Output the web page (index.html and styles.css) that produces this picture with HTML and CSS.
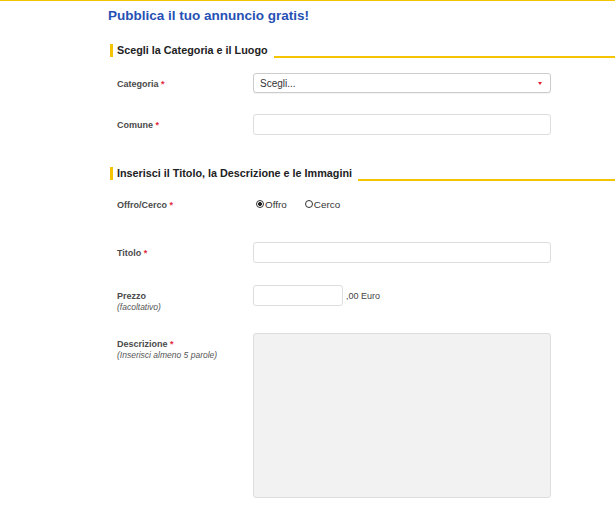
FILE: index.html
```html
<!DOCTYPE html>
<html lang="it">
<head>
  <meta charset="UTF-8" />
  <meta name="viewport" content="width=device-width, initial-scale=1.0" />
  <title>Pubblica il tuo annuncio</title>
  <link rel="stylesheet" href="styles.css">
</head>
<body>
  <div class="page">
    <h1>Pubblica il tuo annuncio gratis!</h1>

    <div class="section-title">
      <span class="section-text">Scegli la Categoria e il Luogo</span>
      <span class="section-line"></span>
    </div>

    <div class="row row-first">
      <label class="field-label" for="categoria">Categoria <span class="req">*</span></label>
      <div class="select-box">
        <select id="categoria">
          <option>Scegli...</option>
        </select>
        <span class="select-arrow"></span>
      </div>
    </div>

    <div class="row row-next">
      <label class="field-label" for="comune">Comune <span class="req">*</span></label>
      <input type="text" id="comune" class="text-input" />
    </div>

    <div class="section-title section-second">
      <span class="section-text">Inserisci il Titolo, la Descrizione e le Immagini</span>
      <span class="section-line"></span>
    </div>

    <div class="row row-radio">
      <div class="field-label">Offro/Cerco <span class="req">*</span></div>
      <div class="radio-group">
        <label class="radio"><input type="radio" name="tipo" checked />Offro</label>
        <label class="radio"><input type="radio" name="tipo" />Cerco</label>
      </div>
    </div>

    <div class="row row-titolo">
      <label class="field-label" for="titolo">Titolo <span class="req">*</span></label>
      <input type="text" id="titolo" class="text-input" />
    </div>

    <div class="row row-prezzo">
      <label class="field-label" for="prezzo">Prezzo<span class="hint">(facoltativo)</span></label>
      <div class="price">
        <input type="text" id="prezzo" class="text-input price-input" />
        <span class="price-suffix">,00 Euro</span>
      </div>
    </div>

    <div class="row row-descr">
      <label class="field-label" for="descrizione">Descrizione <span class="req">*</span><span class="hint">(Inserisci almeno 5 parole)</span></label>
      <textarea id="descrizione"></textarea>
    </div>
  </div>
</body>
</html>
```

FILE: styles.css
```css
body {
  margin: 0;
  font-family: "Liberation Sans", Arial, sans-serif;
  background: #fff;
  border-top: 1px solid #f5c400;
  color: #333;
}

.page {
  padding-left: 108px;
}

h1 {
  margin: 6px 0 0;
  font-size: 13.5px;
  line-height: 18px;
  color: #2651b4;
}

.section-title {
  display: flex;
  align-items: flex-end;
  margin: 19px 0 0 2px;
}

.section-text {
  border-left: 3px solid #f5c400;
  padding-left: 4px;
  font-size: 10.8px;
  font-weight: bold;
  line-height: 13px;
  color: #222;
  white-space: nowrap;
}

.section-line {
  flex: 1;
  margin-left: 6px;
  margin-bottom: -1px;
  border-bottom: 2px solid #f5c400;
}

.section-second {
  margin-top: 32px;
}

.row {
  display: flex;
  align-items: flex-start;
}

.row-first {
  margin-top: 16px;
}

.row-next {
  margin-top: 21px;
}

.row-radio {
  margin-top: 14px;
}

.row-titolo {
  margin-top: 28px;
}

.row-prezzo {
  margin-top: 22px;
}

.row-descr {
  margin-top: 20px;
}

.field-label {
  width: 145px;
  box-sizing: border-box;
  padding: 6px 0 0 9px;
  font-size: 9px;
  font-weight: bold;
  line-height: 11px;
  color: #4a4a4a;
}

.req {
  color: #e3283b;
}

.hint {
  display: block;
  font-weight: normal;
  font-style: italic;
  font-size: 8.5px;
  color: #555;
}

.select-box {
  position: relative;
}

select {
  display: block;
  width: 298px;
  height: 20px;
  margin: 0;
  padding: 0 0 0 6px;
  border: 1px solid #ccc;
  border-radius: 3px;
  background: #fff;
  font-family: inherit;
  font-size: 10px;
  color: #333;
  appearance: none;
  -webkit-appearance: none;
  box-shadow: 0 1px 1px rgba(0, 0, 0, 0.05);
}

.select-arrow {
  position: absolute;
  top: 9px;
  right: 9px;
  border-left: 2.5px solid transparent;
  border-right: 2.5px solid transparent;
  border-top: 3px solid #e3202e;
}

.text-input {
  display: block;
  width: 298px;
  height: 21px;
  box-sizing: border-box;
  margin: 0;
  padding: 0 6px;
  border: 1px solid #ddd;
  border-radius: 3px;
  font-family: inherit;
  font-size: 10px;
}

.radio-group {
  display: flex;
  height: 20px;
  align-items: center;
  padding-left: 3px;
}

.radio {
  display: flex;
  align-items: center;
  font-size: 9.9px;
  color: #333;
  margin-right: 18px;
}

.radio input {
  appearance: none;
  -webkit-appearance: none;
  width: 8px;
  height: 8px;
  margin: 0 1px 0 0;
  border: 1px solid #333;
  border-radius: 50%;
  box-sizing: border-box;
  background: #fff;
}

.radio input:checked {
  background: radial-gradient(circle, #222 0 1.8px, #fff 2.2px);
}

.price {
  display: flex;
  align-items: center;
}

.price-input {
  width: 90px;
}

.price-suffix {
  margin-left: 3px;
  font-size: 9px;
  color: #444;
}

textarea {
  display: block;
  width: 298px;
  height: 165px;
  box-sizing: border-box;
  margin: 0;
  border: 1px solid #ddd;
  border-radius: 3px;
  background: #f2f2f2;
  resize: none;
  font-family: inherit;
}
```
